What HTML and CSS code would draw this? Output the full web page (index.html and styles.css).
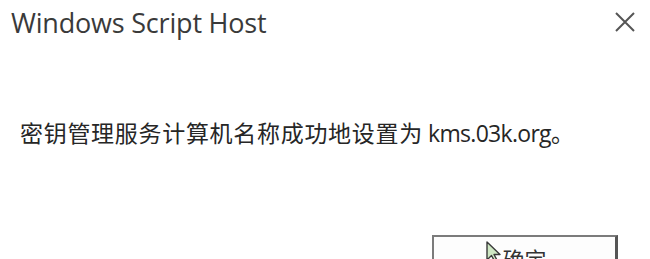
FILE: index.html
```html
<!DOCTYPE html>
<html lang="zh-CN">
<head>
    <meta charset="UTF-8">
    <title>Windows Script Host</title>
    <link rel="stylesheet" href="styles.css">
</head>
<body>
    <div class="dialog">
        <div class="titlebar">
            <span class="title">Windows Script Host</span>
            <span class="close">
                <svg width="22" height="22" viewBox="0 0 22 22">
                    <path d="M2 2 L20 20 M20 2 L2 20" stroke="#555" stroke-width="2" fill="none"/>
                </svg>
            </span>
        </div>

        <div class="message"><span class="cjk">密钥管理服务计算机名称成功地设置为</span> <span class="latin">kms.03k.org</span>。</div>

        <div class="footer">
            <button class="ok-btn">
                <span class="label">确定</span>
                <svg class="cursor" width="16" height="22" viewBox="0 0 16 22">
                    <path d="M1 1 L1 19 L5.5 14.5 L9 21 L11.5 20 L8 13.5 L14 13.5 Z" fill="#cfe8c4" stroke="#3a3a3a" stroke-width="1.4" stroke-linejoin="round"/>
                </svg>
            </button>
        </div>
    </div>
</body>
</html>
```

FILE: styles.css
```css
body {
    margin: 0;
    background: #fff;
    font-family: "Open Sans", "Noto Sans CJK SC", sans-serif;
    overflow: hidden;
}
.dialog {
    width: 650px;
    height: 259px;
    overflow: hidden;
}
.titlebar {
    display: flex;
    justify-content: space-between;
    align-items: center;
    height: 45px;
    padding: 0 14px 0 11px;
}
.title {
    font-size: 27px;
    color: #3a3a3a;
    letter-spacing: -0.2px;
    margin-top: -1px;
}
.close {
    display: flex;
    margin-top: -2px;
}
.message {
    margin-top: 72px;
    padding-left: 20px;
    font-family: "Noto Sans CJK SC", sans-serif;
    font-size: 23px;
    line-height: 30px;
    color: #262626;
}
.cjk {
    letter-spacing: 0.7px;
}
.latin {
    font-family: "Open Sans", sans-serif;
    font-size: 23px;
    letter-spacing: -0.7px;
}
.footer {
    display: flex;
    justify-content: flex-end;
    padding-right: 32px;
    margin-top: 87px;
}
.ok-btn {
    position: relative;
    width: 186px;
    height: 50px;
    background: #fdfdfd;
    border: 2px solid #7b7b7b;
    border-right: 3px solid #555;
    padding: 8px 0 0 0;
    font-family: "Noto Sans CJK SC", sans-serif;
    font-size: 22px;
    color: #333;
    display: flex;
    justify-content: center;
    align-items: flex-start;
}
.label {
    line-height: 26px;
}
.cursor {
    position: absolute;
    left: 52px;
    top: 4px;
}
```
